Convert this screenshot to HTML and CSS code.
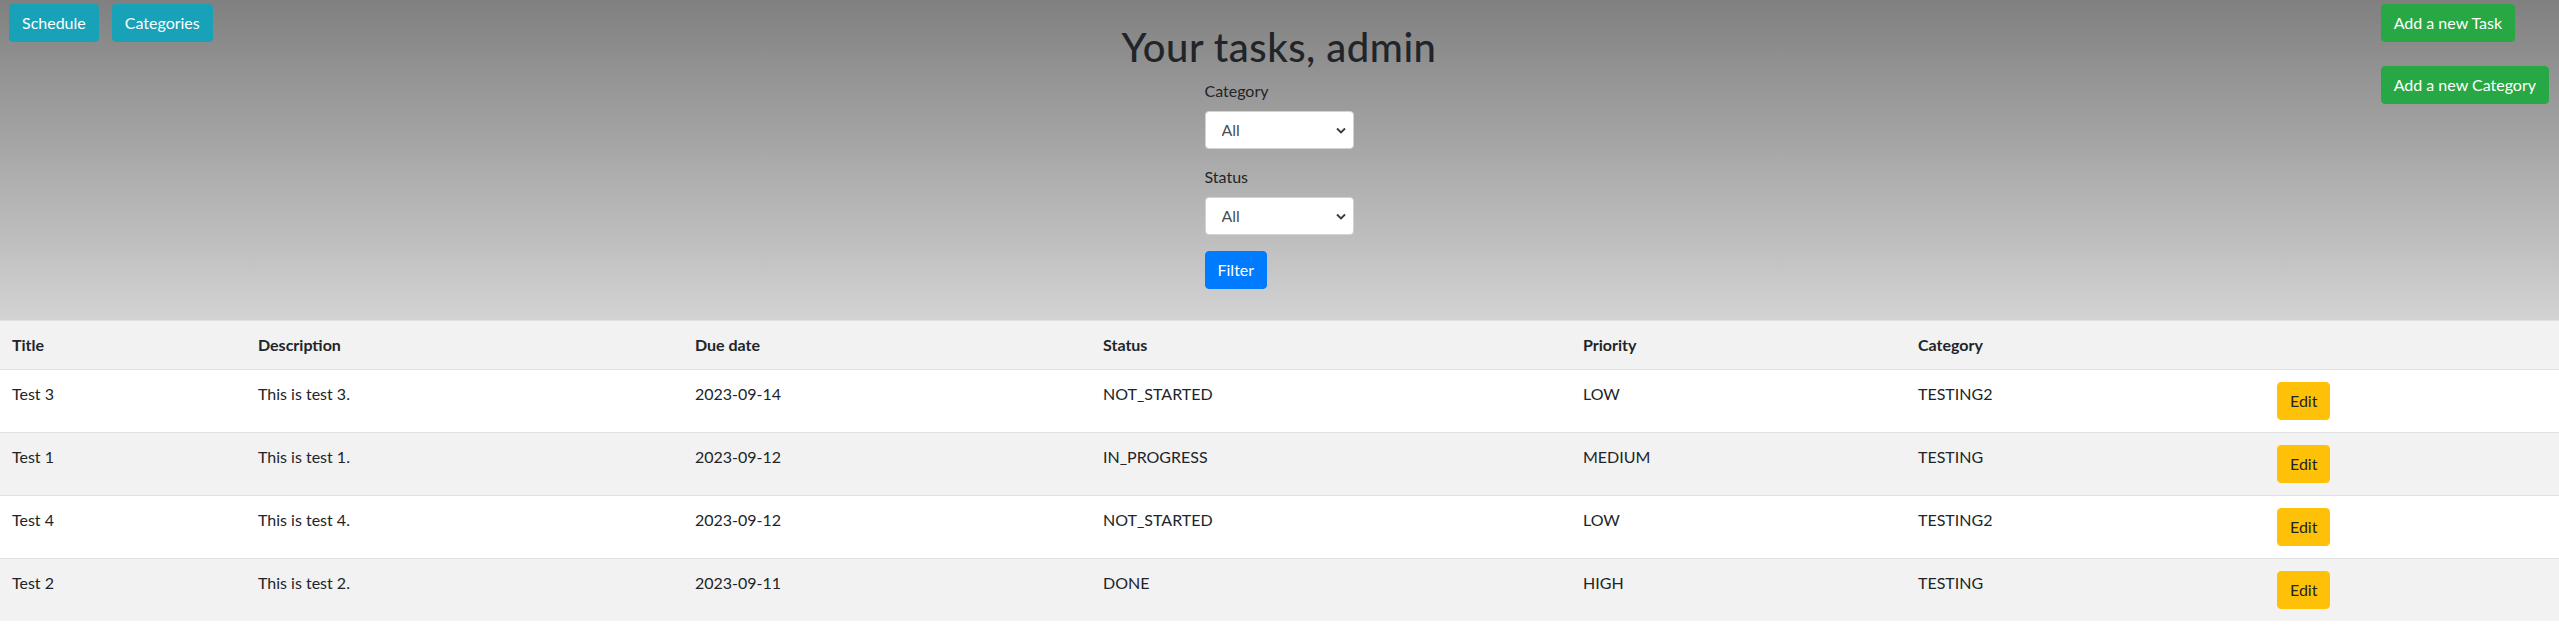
FILE: index.html
```html
<!DOCTYPE html>
<html lang="en">
<head>
<meta charset="utf-8">
<title>Your tasks</title>
<link rel="stylesheet" href="styles.css">
</head>
<body>
<header class="hero">
  <nav class="nav-left">
    <a class="btn btn-info" href="#">Schedule</a>
    <a class="btn btn-info" href="#">Categories</a>
  </nav>
  <div class="center">
    <h1 class="title">Your tasks, admin</h1>
    <form class="filter">
      <div class="form-group">
        <label class="label">Category</label>
        <select class="select"><option>All</option></select>
      </div>
      <div class="form-group">
        <label class="label">Status</label>
        <select class="select"><option>All</option></select>
      </div>
      <button type="button" class="btn btn-primary">Filter</button>
    </form>
  </div>
  <nav class="nav-right">
    <a class="btn btn-success" href="#">Add a new Task</a>
    <a class="btn btn-success" href="#">Add a new Category</a>
  </nav>
</header>
<table class="tasks">
  <colgroup>
    <col class="c-title"><col class="c-desc"><col class="c-date"><col class="c-status"><col class="c-prio"><col class="c-cat"><col class="c-act">
  </colgroup>
  <tr class="head">
    <th>Title</th><th>Description</th><th>Due date</th><th>Status</th><th>Priority</th><th>Category</th><th></th>
  </tr>
  <tr>
    <td>Test 3</td><td>This is test 3.</td><td>2023-09-14</td><td>NOT_STARTED</td><td>LOW</td><td>TESTING2</td><td><a class="btn btn-warning" href="#">Edit</a></td>
  </tr>
  <tr class="alt">
    <td>Test 1</td><td>This is test 1.</td><td>2023-09-12</td><td>IN_PROGRESS</td><td>MEDIUM</td><td>TESTING</td><td><a class="btn btn-warning" href="#">Edit</a></td>
  </tr>
  <tr>
    <td>Test 4</td><td>This is test 4.</td><td>2023-09-12</td><td>NOT_STARTED</td><td>LOW</td><td>TESTING2</td><td><a class="btn btn-warning" href="#">Edit</a></td>
  </tr>
  <tr class="alt">
    <td>Test 2</td><td>This is test 2.</td><td>2023-09-11</td><td>DONE</td><td>HIGH</td><td>TESTING</td><td><a class="btn btn-warning" href="#">Edit</a></td>
  </tr>
</table>
</body>
</html>
```
FILE: styles.css
```css
* { box-sizing: border-box; }
html, body { margin: 0; padding: 0; }
body {
  font-family: "Lato", "Liberation Sans", sans-serif;
  font-size: 16px;
  line-height: 1.5;
  color: #212529;
  background: #fff;
}
.hero {
  display: grid;
  grid-template-columns: 1fr auto 1fr;
  align-items: start;
  padding: 4px 10px 30px 9px;
  background: linear-gradient(#808080, #d3d3d3);
  height: 320px;
}
.nav-left { display: flex; gap: 13px; }
.nav-right {
  justify-self: end;
  display: flex;
  flex-direction: column;
  align-items: flex-start;
  gap: 24px;
}
.center { display: flex; flex-direction: column; align-items: center; }
.title {
  margin: 19px 0 8px;
  font-size: 40px;
  font-weight: 500;
  line-height: 1.2;
  letter-spacing: 0.5px;
  color: #212529;
}
.filter { width: 149px; }
.form-group { margin-bottom: 16px; }
.label { display: block; margin-bottom: 8px; color: #212529; }
.select {
  display: block;
  width: 149px;
  height: 38px;
  padding: 6px 28px 6px 16px;
  font: inherit;
  color: #495057;
  background: #fff url("data:image/svg+xml,%3Csvg xmlns='http://www.w3.org/2000/svg' width='10' height='7' viewBox='0 0 10 7'%3E%3Cpath d='M1 1.5l4 4 4-4' fill='none' stroke='%23343a40' stroke-width='1.8'/%3E%3C/svg%3E") no-repeat right 7px center;
  border: 1px solid #ced4da;
  border-radius: 4px;
  appearance: none;
  -webkit-appearance: none;
}
.btn {
  display: inline-block;
  padding: 6px 12px;
  font: inherit;
  font-size: 16px;
  line-height: 24px;
  border: 1px solid transparent;
  border-radius: 4px;
  text-decoration: none;
  white-space: nowrap;
  cursor: pointer;
}
.btn-info { background: #17a2b8; border-color: #17a2b8; color: #fff; }
.btn-success { background: #28a745; border-color: #28a745; color: #fff; }
.btn-primary { background: #007bff; border-color: #007bff; color: #fff; }
.btn-warning { background: #ffc107; border-color: #ffc107; color: #212529; }

.tasks {
  width: 100%;
  border-collapse: collapse;
  table-layout: fixed;
}
.c-title { width: 246px; }
.c-desc { width: 437px; }
.c-date { width: 408px; }
.c-status { width: 480px; }
.c-prio { width: 335px; }
.c-cat { width: 359px; }
.tasks th, .tasks td {
  padding: 12px;
  text-align: left;
  vertical-align: top;
  border-top: 1px solid #dee2e6;
}
.tasks th { font-weight: 700; }
.head, .alt { background: #f2f2f2; }
```
